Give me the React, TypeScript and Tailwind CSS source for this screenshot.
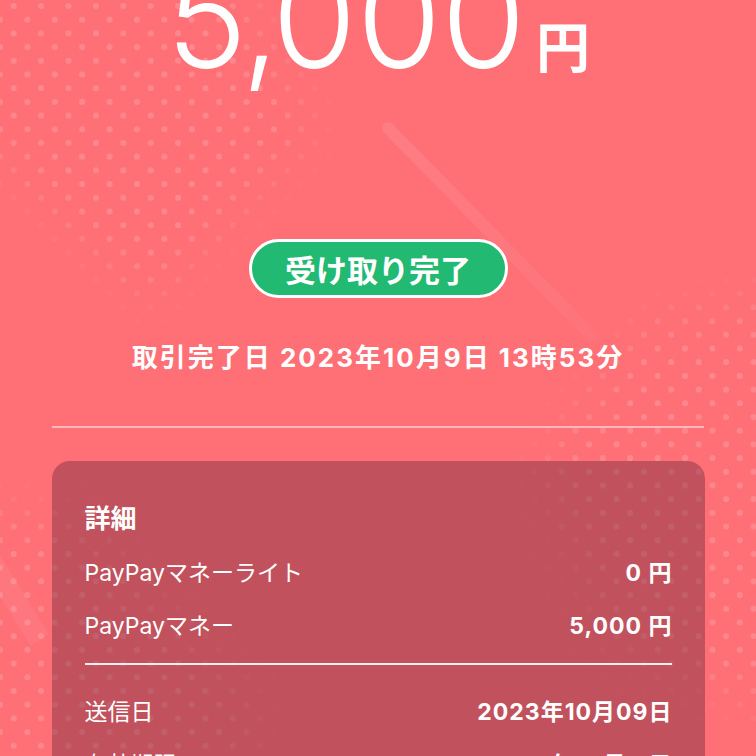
import React from "react";

const rows = [
    { label: "PayPayマネーライト", value: "0 円" },
    { label: "PayPayマネー", value: "5,000 円" },
];

const dates = [
    { label: "送信日", value: "2023年10月09日" },
    { label: "有効期限", value: "2023年10月11日" },
];

function Backdrop() {
    return (
        <svg className="pointer-events-none absolute inset-0 h-full w-full" viewBox="0 0 756 756" preserveAspectRatio="none">
            <defs>
                <pattern id="dots" width="27.4" height="27.4" patternUnits="userSpaceOnUse">
                    <circle cx="13.7" cy="6" r="3" fill="#fff" />
                    <circle cx="0" cy="19.7" r="3" fill="#fff" />
                    <circle cx="27.4" cy="19.7" r="3" fill="#fff" />
                </pattern>
                <filter id="soft" x="-20%" y="-20%" width="140%" height="140%">
                    <feGaussianBlur stdDeviation="24" />
                </filter>
                <mask id="areas">
                    <g filter="url(#soft)" fill="#fff">
                        <polygon points="-40,-40 230,-40 320,130 150,310 -40,130" />
                        <polygon points="800,290 640,320 540,460 610,650 800,720" />
                        <polygon points="-40,500 90,520 250,700 250,800 -40,800" />
                    </g>
                </mask>
                <linearGradient id="stripe" x1="0" y1="0" x2="1" y2="1">
                    <stop offset="0" stopColor="#fff" stopOpacity="0.1" />
                    <stop offset="1" stopColor="#fff" stopOpacity="0.03" />
                </linearGradient>
            </defs>
            <rect width="756" height="756" fill="url(#dots)" opacity="0.17" mask="url(#areas)" />
            <line x1="388" y1="128" x2="592" y2="336" stroke="url(#stripe)" strokeWidth="12" strokeLinecap="round" />
            <line x1="-10" y1="560" x2="40" y2="640" stroke="#fff" strokeOpacity="0.06" strokeWidth="22" />
        </svg>
    );
}

export default function App() {
    return (
        <div className="relative h-[756px] w-full overflow-hidden bg-[#fe6f76] font-['Inter','Noto_Sans_CJK_JP',sans-serif] text-white">
            <Backdrop />

            <div className="relative flex flex-col items-center">
                <div className="-mt-[50px] flex items-baseline">
                    <span className="text-[137px] leading-none font-light">5</span>
                    <span className="-ml-[6px] -mr-[8px] text-[137px] leading-none font-light">,</span>
                    <span className="text-[137px] leading-none font-light">000</span>
                    <span className="ml-[10px] font-['Noto_Sans_CJK_JP',sans-serif] text-[54px] leading-none font-semibold">円</span>
                </div>

                <div className="mt-[152px] flex h-[59px] w-[259px] items-center justify-center rounded-full border-[3px] border-white bg-[#22b973]">
                    <span className="font-['Noto_Sans_CJK_JP',sans-serif] text-[31px] leading-none font-bold">受け取り完了</span>
                </div>

                <p className="mt-[42px] text-[26px] leading-[36px] font-bold tracking-[2px]">
                    取引完了日 2023年10月9日 13時53分
                </p>

                <div className="mt-[50px] h-[2px] w-[652px] bg-white/50" />

                <div className="mt-[33px] w-[653px] rounded-[18px] bg-[rgba(110,40,60,0.42)] pt-[40px] pr-[32px] pb-10 pl-[33px]">
                    <h2 className="text-[26px] leading-[36px] font-bold">詳細</h2>

                    <div className="mt-[10px]">
                        {rows.map((row) => (
                            <div key={row.label} className="flex h-[53px] items-center justify-between text-[23px]">
                                <span className="font-normal">{row.label}</span>
                                <span className="font-bold tracking-[1px]">{row.value}</span>
                            </div>
                        ))}
                    </div>

                    <div className="mt-[10px] mr-[1px] h-[2px] bg-white/90" />

                    <div className="mt-[21px]">
                        {dates.map((row) => (
                            <div key={row.label} className="flex h-[53px] items-center justify-between text-[23px]">
                                <span className="font-normal">{row.label}</span>
                                <span className="font-bold tracking-[1px]">{row.value}</span>
                            </div>
                        ))}
                    </div>
                </div>
            </div>
        </div>
    );
}
